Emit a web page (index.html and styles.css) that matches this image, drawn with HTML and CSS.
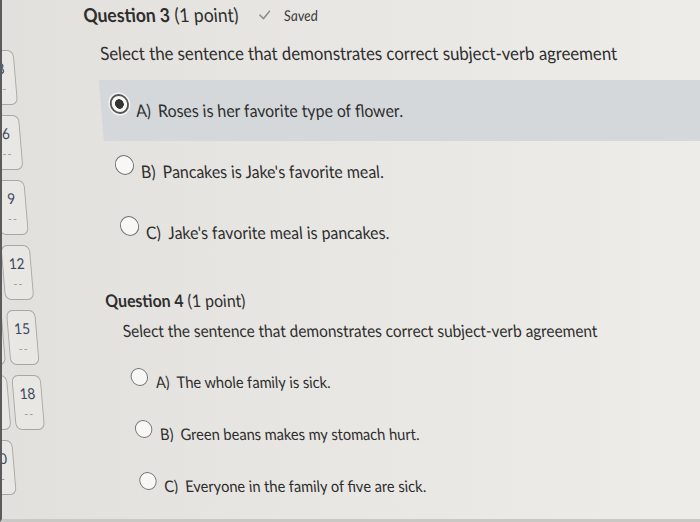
FILE: index.html
```html
<!DOCTYPE html>
<html lang="en">
<head>
<meta charset="utf-8">
<title>Quiz</title>
<link rel="stylesheet" href="styles.css">
</head>
<body>
<div class="screen">
  <nav class="qnav">
    <div class="tile"><span class="num">1</span><span class="dash">--</span></div>
    <div class="tile"><span class="num">2</span><span class="dash">--</span></div>
    <div class="tile"><span class="num">3</span><span class="dash">--</span></div>
    <div class="tile"><span class="num">4</span><span class="dash">--</span></div>
    <div class="tile"><span class="num">5</span><span class="dash">--</span></div>
    <div class="tile"><span class="num">6</span><span class="dash">--</span></div>
    <div class="tile"><span class="num">7</span><span class="dash">--</span></div>
    <div class="tile"><span class="num">8</span><span class="dash">--</span></div>
    <div class="tile"><span class="num">9</span><span class="dash">--</span></div>
    <div class="tile"><span class="num">10</span><span class="dash">--</span></div>
    <div class="tile"><span class="num">11</span><span class="dash">--</span></div>
    <div class="tile"><span class="num">12</span><span class="dash">--</span></div>
    <div class="tile"><span class="num">13</span><span class="dash">--</span></div>
    <div class="tile"><span class="num">14</span><span class="dash">--</span></div>
    <div class="tile"><span class="num">15</span><span class="dash">--</span></div>
    <div class="tile"><span class="num">16</span><span class="dash">--</span></div>
    <div class="tile"><span class="num">17</span><span class="dash">--</span></div>
    <div class="tile"><span class="num">18</span><span class="dash">--</span></div>
    <div class="tile"><span class="num">19</span><span class="dash">--</span></div>
    <div class="tile"><span class="num">20</span><span class="dash">--</span></div>
  </nav>
  <main class="quiz">
    <section class="question q-near">
      <header class="q-head">
        <h2 class="q-title"><b>Question 3</b> (1 point)</h2>
        <span class="saved"><svg class="check" width="13" height="10" viewBox="0 0 13 10"><path d="M1 5.2 L4.6 8.6 L12 1.2" fill="none" stroke="#8c8c8c" stroke-width="1.6" stroke-linecap="round" stroke-linejoin="round"/></svg><i>Saved</i></span>
      </header>
      <p class="prompt">Select the sentence that demonstrates correct subject-verb agreement</p>
      <ul class="options">
        <li class="option is-selected"><span class="radio"></span><span class="letter">A)</span><span class="text">Roses is her favorite type of flower.</span></li>
        <li class="option"><span class="radio"></span><span class="letter">B)</span><span class="text">Pancakes is Jake's favorite meal.</span></li>
        <li class="option"><span class="radio"></span><span class="letter">C)</span><span class="text">Jake's favorite meal is pancakes.</span></li>
      </ul>
    </section>
    <section class="question q-far">
      <header class="q-head">
        <h2 class="q-title"><b>Question 4</b> (1 point)</h2>
      </header>
      <p class="prompt">Select the sentence that demonstrates correct subject-verb agreement</p>
      <ul class="options">
        <li class="option"><span class="radio"></span><span class="letter">A)</span><span class="text">The whole family is sick.</span></li>
        <li class="option"><span class="radio"></span><span class="letter">B)</span><span class="text">Green beans makes my stomach hurt.</span></li>
        <li class="option"><span class="radio"></span><span class="letter">C)</span><span class="text">Everyone in the family of five are sick.</span></li>
      </ul>
    </section>
  </main>
</div>
</body>
</html>
```
FILE: styles.css
```css
html, body {
  margin: 0;
  height: 100%;
  overflow: hidden;
}

body {
  box-sizing: border-box;
  border-left: 2px solid #5b5b5b;
  border-bottom: 3px solid #c9c8c5;
  background: linear-gradient(90deg, #e2e0dc 0%, #e7e5e1 35%, #ebe9e6 70%, #edece9 100%);
  font-family: Lato, "Noto Sans", sans-serif;
  color: #2e2e2e;
}

/* the photographed screen: slightly sheared and squeezed */
.screen {
  display: flex;
  align-items: flex-start;
  width: 800px;
  height: 519px;
  transform: skewX(4.75deg) scaleX(0.91);
  transform-origin: 0 0;
}

/* question navigator (mostly scrolled out of view) */
.qnav {
  flex: none;
  margin-left: -98px;
  padding-top: 50px;
  display: grid;
  grid-template-columns: repeat(3, 32px);
  grid-auto-rows: 55px;
  column-gap: 5px;
  row-gap: 10px;
}

.tile {
  box-sizing: border-box;
  border: 1px solid #a9a7a3;
  border-radius: 7px;
  background: #e9e7e3;
  display: flex;
  flex-direction: column;
  align-items: center;
  padding-top: 8px;
}

.num {
  font-size: 15px;
  line-height: 18px;
  color: #3a4661;
}

.dash {
  margin-top: 5px;
  font-size: 12px;
  line-height: 14px;
  letter-spacing: 1px;
  color: #8d8d8d;
}

/* quiz body */
.quiz {
  flex: 1;
  padding-left: 80px;
  padding-top: 3px;
}

.q-head {
  display: flex;
  align-items: center;
  height: 24px;
}

.q-title {
  margin: 0;
  font-size: 19.25px;
  line-height: 24px;
  font-weight: 400;
  white-space: nowrap;
}

.q-title b {
  font-weight: 700;
}

.saved {
  display: inline-flex;
  align-items: center;
  gap: 14px;
  margin-left: 23px;
  font-size: 15px;
  color: #3b3b3b;
}

.check {
  display: block;
}

.prompt {
  margin: 15px 0 0 15px;
  font-size: 18.4px;
  line-height: 23px;
  white-space: nowrap;
}

.options {
  list-style: none;
  margin: 15px 0 0;
  padding: 0;
}

.option {
  display: flex;
  align-items: flex-start;
  margin-left: 10.5px;
  padding: 21px 0 20px 10px;
  font-size: 17.4px;
  line-height: 20px;
  white-space: nowrap;
}

.option.is-selected {
  background: #d4d8da;
}

.radio {
  flex: none;
  box-sizing: border-box;
  width: 21px;
  height: 20px;
  margin-top: -7px;
  border: 1.5px solid #707070;
  border-radius: 50%;
  background: #f7f7f6;
}

.is-selected .radio {
  border: 2px solid #555;
  background: radial-gradient(circle, #333 0 4.5px, #f7f7f6 5px);
  box-shadow: 0 0 0 1.5px #f2f2f2;
}

.letter {
  margin: 0 8px 0 7.5px;
}

/* second question: slightly farther from the camera */
.q-far {
  margin-top: 27px;
}

.q-far .q-head {
  margin-left: -2px;
  height: 22px;
}

.q-far .q-title {
  font-size: 17.4px;
  line-height: 22px;
}

.q-far .prompt {
  margin: 9px 0 0 14.5px;
  font-size: 16.9px;
  line-height: 20px;
}

.q-far .options {
  margin-top: 15px;
}

.q-far .option {
  margin-left: 10px;
  padding: 17px 0 17px 8.5px;
  font-size: 16px;
  line-height: 18px;
}

.q-far .radio {
  width: 19px;
  height: 18px;
  margin-top: -5px;
}

.q-far .letter {
  margin: 0 8px 0 8.5px;
}
```
